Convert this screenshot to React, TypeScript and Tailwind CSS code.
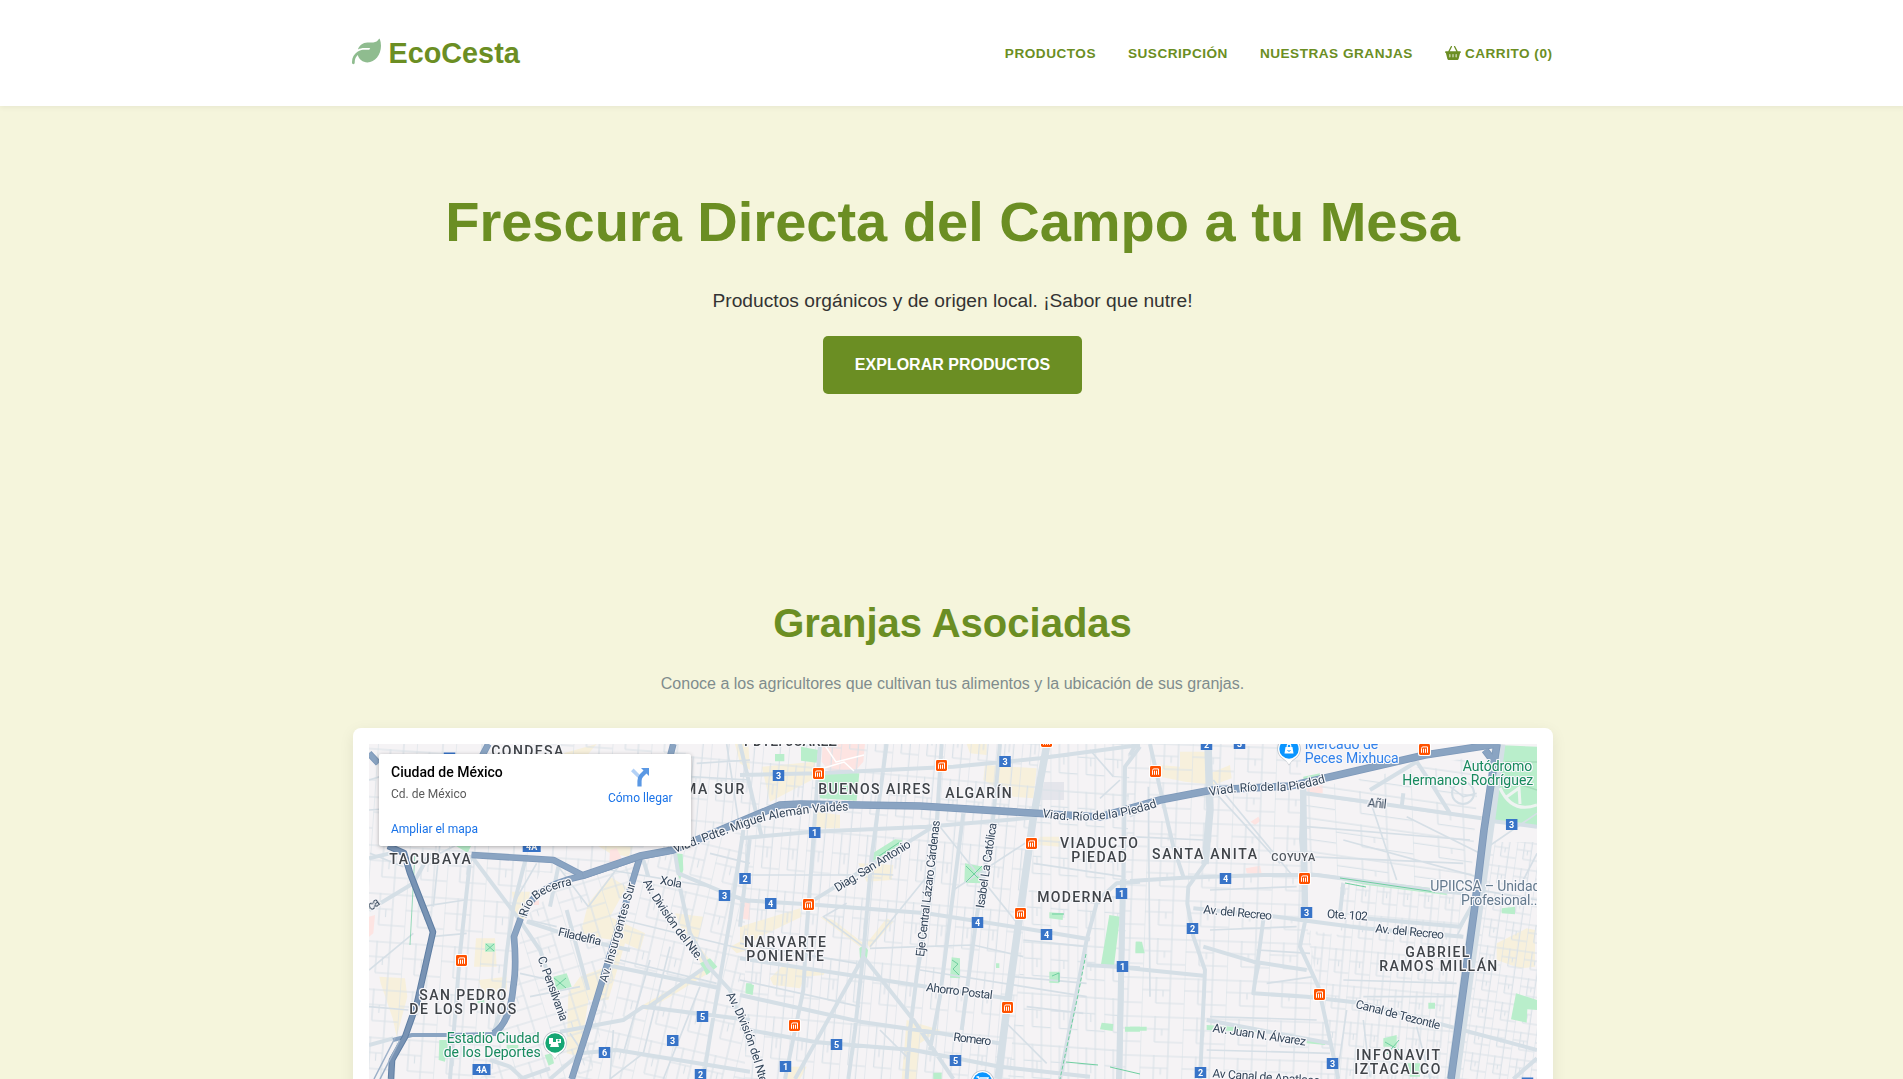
import React from "react";
import { FaBasketShopping, FaLeaf } from "react-icons/fa6";

/* ---------- Map data ---------- */

type District = [text: string, x: number, y: number, width: number];
const districts: District[] = [
  ["TACUBAYA", 389.3, 864, 81.5],
  ["CONDESA", 491.3, 755.5, 72],
  ["ROMA SUR", 662, 794, 82.3],
  ["SAN PEDRO", 419.3, 1000, 87],
  ["DE LOS PINOS", 409.3, 1014, 107],
  ["NARVARTE", 744, 947, 82],
  ["PONIENTE", 746.3, 961, 77.5],
  ["BUENOS AIRES", 818.3, 794, 112],
  ["ALGARÍN", 945.3, 798, 66.5],
  ["VIADUCTO", 1060, 848, 78],
  ["PIEDAD", 1071.3, 862, 55.5],
  ["MODERNA", 1037.3, 902, 75],
  ["PDTE. JUÁREZ", 744, 746, 93],
  ["SANTA ANITA", 1152, 859, 105],
  ["GABRIEL", 1405.3, 957, 64],
  ["RAMOS MILLÁN", 1379.3, 971, 118],
  ["INFONAVIT", 1356, 1060, 84],
  ["IZTACALCO", 1354.3, 1074, 86],
];

type Place = [text: string, x: number, y: number, width: number, color: string];
const places: Place[] = [
  ["Estadio Ciudad", 446.7, 1043, 93, "#188a5e"],
  ["de los Deportes", 443.7, 1057, 97, "#188a5e"],
  ["Autódromo", 1462.7, 771, 69.5, "#188a5e"],
  ["Hermanos Rodríguez", 1402.3, 785, 131, "#188a5e"],
  ["Mercado de", 1304.7, 749, 73.5, "#3080ea"],
  ["Peces Mixhuca", 1304.7, 763, 94, "#3080ea"],
  ["UPIICSA – Unidad", 1430.3, 891, 110, "#647a8e"],
  ["Profesional...", 1461, 905, 80, "#647a8e"],
];

type StreetName = [text: string, x: number, y: number, angle: number, width: number];
const streetNames: StreetName[] = [
  ["Filadelfia", 557.5, 935.5, 13, 44],
  ["C. Pensilvania", 537.5, 958, 70, 68],
  ["Av. Insurgentes Sur", 607, 983, -74, 103],
  ["Xola", 659.5, 884, 10, 22],
  ["ca", 371, 911, -35, 12],
  ["Diag. San Antonio", 837.5, 892, -31.7, 87],
  ["Eje Central Lázaro Cárdenas", 924, 957, -83.3, 137],
  ["Isabel La Católica", 984, 908.5, -81.5, 86],
  ["Añil", 1367.3, 806.7, 6, 19],
  ["Av. del Recreo", 1203, 913.3, 5.5, 69],
  ["Ote. 102", 1326.7, 917.7, 4, 41],
  ["Av. del Recreo", 1375, 932.3, 5.5, 69],
  ["Canal de Tezontle", 1355, 1007.7, 14.5, 87],
  ["Av. Juan N. Álvarez", 1212.3, 1031.7, 8.5, 94],
  ["Av Canal de Apatlaco", 1212.3, 1077.3, 4, 108],
  ["Ahorro Postal", 925.7, 991, 7, 67],
  ["Romero", 953, 1040.7, 7, 38],
];

type CurvedName = [id: string, text: string, d: string, width: number];
const curvedNames: CurvedName[] = [
  ["n1", "Viad. Pdte. Miguel Alemán Valdés", "M675 853 L740 829 Q782 812 860 810", 180],
  ["n2", "Río Becerra", "M527 917 Q531 892 574 885", 59],
  ["n3", "Av. División del Nte.", "M643 882 Q658 912 702 966", 97],
  ["n4", "Av. División del Nte.", "M726 995 Q748 1032 764 1100", 98],
  ["n5", "Viad. Río de la Piedad", "M1042 817 Q1100 828 1166 804", 117],
  ["n6", "Viad. Río de la Piedad", "M1210 796 Q1240 790 1285 791 Q1300 790 1335 780", 117],
];

type Point = [number, number];
type Shield = [x: number, y: number, label: string];
const shields: Shield[] = [
  [531.7, 846.5, "4A"], [745, 878.5, "2"], [724.5, 895.5, "3"], [702.5, 1016.5, "5"],
  [672.7, 1040.5, "3"], [604.5, 1052.5, "6"], [481.5, 1069.5, "4A"], [700.5, 1074.5, "2"],
  [449.5, 758, ""], [778.5, 775.5, "3"], [1005, 761.5, "3"], [814.7, 832.5, "1"],
  [770.7, 903.5, "4"], [977.5, 922.5, "4"], [1046.5, 934.5, "4"], [1121.5, 893.5, "1"],
  [1122.5, 966.5, "1"], [836.5, 1044.5, "5"], [955.5, 1060.5, "5"], [785.5, 1066.5, "1"],
  [1206.5, 744.5, "2"], [1239.5, 743.5, "3"], [1511.7, 824.5, "3"], [1225.5, 878.5, "4"],
  [1306.5, 912.5, "3"], [1192.5, 928.5, "2"], [1332.5, 1063.5, "3"], [1200.5, 1072.5, "2"],
  [1527.5, 1083, ""],
];
const stations: Point[] = [
  [461.5, 960.5], [818.5, 773.5], [941.5, 765.5], [1046.5, 741.5], [1031.5, 843.5],
  [808.5, 904.5], [1020.5, 913.5], [1007.5, 1007.5], [794.5, 1025.5],
  [1155.5, 771.5], [1424.5, 749.5], [1304.5, 878.5], [1319.5, 994.5],
];

/* Local street textures: [id, cell width, cell height, rotation, skew] */
type Texture = [id: string, w: number, h: number, rotation: number, skew: number];
const textures: Texture[] = [
  ["west", 13, 16, 4, 0],
  ["napoles", 15, 13, -17, 0],
  ["narvarte", 11, 17, 13, 0],
  ["center", 8.6, 21, 5, 0],
  ["moderna", 9, 17, 4, 4],
  ["anita", 14, 13, 2, 0],
  ["granjas", 26, 11, 8, 10],
  ["millan", 7, 12, 5, 0],
  ["east", 7.5, 9, 8, 0],
];
const zones: [texture: string, points: string][] = [
  ["west", "369,744 690,744 640,855 583,876 540,872 518,930 508,1010 495,1079 369,1079"],
  ["napoles", "522,920 560,886 640,862 590,1079 480,1079 512,1010"],
  ["narvarte", "640,862 745,830 745,1079 573,1079"],
  ["center", "690,744 1040,744 1010,1079 745,1079 745,826 660,850"],
  ["moderna", "1045,744 1130,744 1122,1079 1008,1079"],
  ["anita", "1128,744 1300,744 1308,930 1340,1079 1122,1079"],
  ["granjas", "1303,790 1480,755 1470,895 1305,876"],
  ["millan", "1340,882 1465,892 1450,1079 1340,1079 1306,930 1340,935"],
  ["east", "1488,842 1537,842 1537,1079 1455,1079"],
];

/* ---------- Map road layers. Each tile is drawn at three units per pixel. ---------- */

interface Tile {
  x: number;
  y: number;
  commercial: string;
  park: string;
  hospital: string;
  minor: string;
  major: string;
  arterial: string;
}

const tiles: Tile[] = [
  {
    x: 350,
    y: 720,
    commercial:
      "M485 515 L540 515 L525 595 L500 600Z M378 655 L435 655 L440 740 L372 740Z M88 770 L165 775 L172 830 L140 950 L128 895 L92 790Z M385 780 L470 770 L470 820 L400 820Z M715 550 L780 470 L830 500 L780 590 L885 640 L870 690 L825 670 L775 840 L715 840 L690 1010 L650 1000 L655 820 L690 770 L770 740 L790 660 L690 645Z M640 100 L740 72 L700 120Z M740 375 L850 378 L835 410 L780 400Z M975 580 L1060 590 L1040 670 L1080 720 L1060 740 L1010 660Z M870 860 L1000 785 L1060 745 L1075 760 L960 830 L890 870Z M1140 680 L1190 655 L1195 690 L1160 700Z M1155 72 L1195 72 L1200 150 L1170 130Z",
    park:
      "M405 670h30v25h-30z M610 770 L650 760 L665 800 L620 812Z M268 960 L295 960 L285 1025 L266 1020Z M584 1005 L605 1000 L612 1030 L596 1037Z M975 400 L998 402 L1000 450 L990 480 L978 450Z M1050 730 L1080 715 L1102 740 L1070 765Z M318 378h45l-10 20z M1190 790h15v30h-15z M470 975h35v15h-35z M383 835h20v15h-20z",
    hospital: "M57 590 L75 585 L70 640 L57 650Z M780 390 L800 385 L815 415 L778 430Z M1172 540 L1200 540 L1200 600 L1170 595Z M545 540h22v15h-22z",
    minor:
      "M57 270 L200 260 M57 180 L90 170 M60 400 L160 440 M57 750 L190 640 M57 860 L175 870 M215 560 L345 540 M245 650 L350 640 M270 370 L250 560 M330 370 L230 420 M560 430 L485 560 M610 420 L715 560 M715 560 L820 420 M535 600 L620 620 M540 830 L690 800 M510 760 L600 780 M780 450 L1080 500 M820 600 L1190 690 M810 720 L1100 790 M880 1000 L780 1077 M700 1000 L660 940 M790 930 L780 1077 M900 720 L820 1000 M960 680 L880 1000 M1050 800 L940 1077 M1130 72 L1165 300 M1020 170 L1200 180 M1040 130 L1200 120 M1080 400 L1200 430",
    major:
      "M362 405 L330 700 L300 1077 M362 405 L505 595 L570 690 L640 900 M530 605 L700 660 L840 690 M530 405 L490 560 L470 700 L455 860 L430 940 M625 440 L600 560 M650 570 L715 810 M57 570 L190 490 L240 400 M57 415 L120 400 M57 975 L130 955 M630 935 L820 900 L880 860 L1200 900 M600 1077 L690 1000 L800 990 L1200 1055 M510 1077 L600 1045 M420 1020 L480 1040 L520 1077 M880 420 L895 470 M975 400 L985 460 L1140 525 L1200 545 M985 480 L1020 640 L1075 740 L1140 810 L1200 980 M1180 330 L1140 600 L1080 950 L1060 1077 M770 735 L1110 805 M1060 745 L890 865",
    arterial:
      "M365 405 L610 420 L700 467 L870 410 L970 390 M430 940 Q480 910 490 800 Q500 740 492 650 L512 595 M520 590 Q540 500 700 467 M870 410 L715 920 L665 1077 M415 72 L385 130 M970 72 L955 130 M57 100 L85 130",
  },
  {
    x: 740,
    y: 730,
    commercial:
      "M230 245 L300 255 L300 295 L228 295Z M65 110 L225 95 L225 145 L90 215Z M680 42 L740 42 L740 75 L690 70Z M735 105 L890 115 L880 205 L820 200 L730 150Z M355 400 L460 405 L455 450 L380 455Z M380 640 L440 565 L460 575 L390 655Z M240 560 L280 570 L370 640 L360 650Z M0 590 L180 535 L185 560 L60 620 L0 660Z M130 705 L260 720 L250 735 L195 740 L180 775 L100 765 L90 745Z M500 870 L600 900 L540 940 L530 1047 L485 1047Z M900 320 L965 320 L960 350 L890 345Z M150 1010 L200 1010 L180 1047 L140 1047Z",
    park:
      "M235 125 L358 130 L350 212 L240 205Z M183 50 L235 60 L230 98 L183 92Z M105 72h28v22h-28z M395 395 L398 370 L465 328 L488 330 L475 350Z M675 400 L730 410 L728 460 L673 458Z M358 655 Q370 640 384 660 L380 690 L360 688Z M635 682 L660 685 L660 745 L630 743Z M1108 555 L1140 560 L1122 707 L1083 703Z M928 547 L970 550 L968 570 L928 565Z M928 725 L960 725 L958 760 L928 758Z M18 760 L42 765 L38 795 L16 790Z M1085 878 L1120 882 L1118 903 L1080 898Z M1155 890h45v15h-45z M1187 635h13v30h-13z M768 700h10v14h-10z M580 1028h25v19h-25z",
    hospital: "M248 42 L375 42 L370 95 L350 118 L270 128 L245 95Z M0 530 L18 515 L25 560 L0 568Z",
    minor:
      "M0 435 L360 435 M370 430 L460 435 M600 290 L720 440 L840 590 M640 480 L870 330 M560 440 L390 650 M390 655 L540 650 L700 645 L850 680 M0 750 L360 830 M0 640 L350 700 M540 720 L1040 800 M800 880 L920 1000 M420 900 L500 980 M320 520 L250 560 L370 650 M1080 205 L1140 150 M1050 60 L1120 140 M880 400 L1150 440 M890 500 L1080 520 M850 630 L1040 650 M820 740 L1040 760 M860 830 L1030 850",
    major:
      "M0 135 L230 130 L640 110 L900 85 L1200 45 M0 325 L220 305 L560 290 L890 262 M0 42 L65 320 M240 42 L215 400 L200 600 L190 780 L135 1047 M440 42 L395 380 L370 670 L345 900 L325 1047 M605 42 L580 440 L530 740 L510 900 L500 1047 M205 520 L580 290 M0 510 L205 523 L560 550 L850 595 L1050 628 M370 680 L165 1047 M370 680 L520 870 L640 1047 M0 685 L560 770 L800 805 M0 795 L360 875 L600 910 L790 942 M0 895 L230 937 L520 960 L780 1010 L1050 1040 M670 250 L600 800 L570 960 M780 42 L760 260 L710 560 L665 900 M1070 520 L1040 630 L960 1047 M1200 455 L1130 460 L1085 500 M1200 50 L1155 110 L1150 500 L1140 1047 M1040 705 L1200 715 M0 590 L30 320",
    arterial: "",
  },
  {
    x: 1130,
    y: 730,
    commercial:
      "M85 105 L150 110 L150 65 L228 65 L228 135 L300 105 L305 145 L250 165 L165 155 L90 140Z M1100 640 L1190 595 L1215 600 L1215 710 L1170 715 L1100 690Z",
    park:
      "M1100 45 L1221 50 L1221 292 L1082 275Z M1158 790 L1221 810 L1221 840 L1192 838 L1190 878 L1143 868Z M630 440 L950 480 L950 495 L870 485 L710 465 L635 450Z M18 635h18l8 35h-28z M0 890h50v12h-50z M230 885 L380 895 L380 905 L230 900Z M530 925 L590 935 L585 945 L530 940Z M895 818h20v18h-20z M1115 535 L1155 530 L1155 553 L1115 550Z M760 925 L800 915 L800 950 L760 950Z M520 140 L570 130 L565 150 L520 155Z M830 1000h40v40h-30z",
    hospital: "M347 415 L390 407 L395 432 L350 430Z M362 275 L385 260 L392 272 L375 285Z M528 175 L578 165 L578 190 L535 190Z",
    minor:
      "M250 150 L490 440 M240 170 L450 400 M720 210 L800 450 M830 260 L1050 370 M530 380 L1000 400 M530 290 L1020 330 M640 330 L1040 440 M0 320 L220 330 M55 170 L60 800 M130 200 L0 260 M240 480 L500 470 M240 600 L500 590 M380 660 L540 670 M390 700 L370 790 M410 760 L550 740 M640 750 L980 760 M700 800 L980 800 M1060 360 L1221 250 M1221 370 L1180 450 M1020 540 L980 620 M650 840 L620 1047 M240 860 L560 870 M230 960 L600 970 M700 870 L720 1040 M860 890 L900 1047 M960 170 L1000 200 L1040 190 M1050 480 L1221 510",
    major:
      "M60 42 L100 220 L130 350 L160 440 M235 42 L240 240 L225 400 L175 470 L172 520 L190 620 L225 720 L210 1047 M0 453 L160 443 L400 435 L560 435 L900 480 L1000 490 M520 150 L513 330 L525 450 L528 560 L510 650 L565 770 L600 930 L625 1047 M525 190 L780 225 L1055 265 M860 95 L910 170 L960 250 M640 460 L630 550 M190 535 L440 560 L700 595 L1000 620 M700 565 L990 590 L1030 520 M220 650 L370 695 L530 720 M0 715 L220 737 M400 570 L370 790 L530 800 L700 820 L1221 960 M820 190 L815 230 M230 870 L600 940 M720 180 L860 95 M1060 270 L1221 290 M1221 985 L1150 1047 M0 75 L18 42",
    arterial: "",
  },
];

const freewayPaths = [
  "M583 875.5 L640 856 L673 850 Q730 826 780 805 L800 804 L920 806 L1032 813 L1100 817 L1160 800 L1212 790 L1290 786 L1325 778 L1425 755 L1497 744",
  "M1497 744 L1484 830 L1475 905 L1464 985 L1451 1079",
  "M1485 750 L1494 762",
];

/* Chained drop shadows give a whole label one light outline, so glyphs never cover their neighbours. */
const halo =
  "[filter:drop-shadow(1px_0_0_#f7f7fa)_drop-shadow(-1px_0_0_#f7f7fa)_drop-shadow(0_1px_0_#f7f7fa)_drop-shadow(0_-1px_0_#f7f7fa)]";
const roadText = "fill-[#34465a] font-[Roboto,sans-serif] text-[12px]";

function StreetTextures() {
  return (
    <>
      <defs>
        {textures.map(([id, w, h, rotation, skew]) => (
          <pattern
            key={id}
            id={"streets-" + id}
            width={w * 3}
            height={h * 3}
            patternUnits="userSpaceOnUse"
            patternTransform={`rotate(${rotation}) skewX(${skew})`}
          >
            <path
              d={`M0 0V${h * 3} M${w} 0V${h * 2} M${w * 2} 0V${h * 3} M0 1H${w * 3} M0 ${h}H${w * 2} M${w} ${h * 2}H${w * 3} M${w * 1.5} ${h}V${h * 1.5}`}
              fill="none"
              stroke="#dae2e8"
              strokeWidth="1.2"
            />
          </pattern>
        ))}
      </defs>
      {zones.map(([id, points]) => (
        <polygon key={id} points={points} fill={`url(#streets-${id})`} />
      ))}
    </>
  );
}

function MetroIcon({ x, y }: { x: number; y: number }) {
  return (
    <g transform={`translate(${x} ${y})`}>
      <rect x="-6.5" y="-6.5" width="13" height="13" rx="2" fill="#fff" />
      <rect x="-5.5" y="-5.5" width="11" height="11" rx="1.4" fill="#ff5200" />
      <path d="M-3 3.3V-1Q-3 -2.6 -1.5 -2.6H3V3.3M-1 3.3V-.8M1 3.3V-.8" fill="none" stroke="#fff" strokeWidth="1" />
    </g>
  );
}

function RouteShield({ x, y, label }: { x: number; y: number; label: string }) {
  const w = label.length > 1 ? 18 : 11.5;
  return (
    <g transform={`translate(${x} ${y})`}>
      <rect x={-w / 2} y="-5.5" width={w} height="11" fill="#3874c8" />
      {label && (
        <text y="3.2" textAnchor="middle" className="fill-white font-[Roboto,sans-serif] text-[9px] font-bold">
          {label}
        </text>
      )}
    </g>
  );
}

function Pin({ x, y, color, children }: { x: number; y: number; color: string; children: React.ReactNode }) {
  return (
    <g transform={`translate(${x} ${y})`}>
      <path d="M0 16.5Q-2 12.5 -6.5 9.8A11.8 11.8 0 1 1 6.5 9.8Q2 12.5 0 16.5Z" fill="#9aa4ad" opacity=".6" />
      <path d="M0 15.5Q-2 12 -6 9.2A11 11 0 1 1 6 9.2Q2 12 0 15.5Z" fill="#fff" />
      <circle r="9.7" fill={color} />
      {children}
    </g>
  );
}

function CityMap() {
  return (
    <svg viewBox="369 744 1168 450" className="block h-[450px] w-[1168px]" role="img" aria-label="Mapa de granjas">
      <rect x="369" y="744" width="1168" height="450" fill="#f5f3f5" />
      {tiles.map((t) => (
        <g key={t.x} transform={`translate(${t.x} ${t.y}) scale(.33333)`}>
          <path d={t.commercial} fill="#f7f0dc" />
          <path d={t.hospital} fill="#fde4e2" />
        </g>
      ))}
      <path d="M1044 782h20v18h-24z" fill="#e4e5eb" />
      <StreetTextures />
      {tiles.map((t) => (
        <g key={t.x} transform={`translate(${t.x} ${t.y}) scale(.33333)`} fill="none" strokeLinejoin="round">
          <path d={t.park} fill="#b9eecb" />
          <path d={t.minor} stroke="#d6dfe6" strokeWidth="5" />
          <path d={t.major} stroke="#d5dfe6" strokeWidth="12" />
        </g>
      ))}
      <g fill="none" stroke="#d5dfe6">
        <path d="M1047 744 L1033 820 L1007 1007 L998 1079" strokeWidth="7.5" />
        <path d="M1123 880 L1119 1079" strokeWidth="6" />
        <path d="M1208 744 L1210 810 L1205 864" strokeWidth="7.5" />
        <path d="M1303 780 L1305 915" strokeWidth="6.5" />
        <path d="M1499 744 L1486 840 L1453 1079" strokeWidth="13" />
        <circle cx="1463" cy="793" r="11" strokeWidth="2" />
      </g>
      <g fill="none" stroke="#6fcfa0" strokeWidth="1">
        <path d="M1086 954 L1078 995 L1060 1079" strokeDasharray="4 2" />
        <path d="M1066 1062 L1098 1065 M1110 1067 L1140 1074" />
        <path d="M1340 878 L1435 892 M1345 883 L1366 887" />
        <path d="M415 852 L410 945" strokeWidth=".7" />
        <path d="M966 866 L982 882 M982 866 L966 882 M486 944 L494 951 M494 944 L486 951 M554 978l12 10 M566 978l-12 10 M1385 1042l14 8 M1399 1040l-12 14" />
        <path d="M952 960l6 4-5 5 6 6 M862 996" />
        <path d="M876 858 L900 842 M1052 914h12 M1052 976l7-3v9" />
      </g>
      <path d="M1500 788 Q1512 814 1537 805 M1505 798 L1519 788 L1520 804" fill="none" stroke="#eef3f1" strokeWidth="3" />
      <path d="M1505 762 L1537 762 M1500 778 L1537 790" fill="none" stroke="#a3dcb8" strokeWidth="1.5" />
      <path d="M824 744 l12 18 28 -7 M824 768 l20 -6 10 9" fill="none" stroke="#fff" strokeWidth="1.5" />
      <g fill="none" strokeLinejoin="round">
        {tiles.map((t) => (
          <g key={t.x} transform={`translate(${t.x} ${t.y}) scale(.33333)`}>
            <path d={t.arterial} stroke="#7d98b9" strokeWidth="20" />
            <path d={t.arterial} stroke="#8aa4c2" strokeWidth="15" />
          </g>
        ))}
        {freewayPaths.map((d) => (
          <path key={d} d={d} stroke="#7d98b9" strokeWidth="7.6" />
        ))}
        {freewayPaths.map((d) => (
          <path key={d} d={d} stroke="#8aa4c2" strokeWidth="6" />
        ))}
        <path d="M393 1040 L412 1035 L447 1035 L495 1034" stroke="#8aa4c2" strokeWidth="4" />
        <path d="M388 846 L404 853 L410 873 L433 932 L417 1003 L405 1037 L392 1060 L391 1079" stroke="#5f7ea3" strokeWidth="6.5" />
        <path d="M388 846 L404 853 L410 873 L433 932 L417 1003 L405 1037 L392 1060 L391 1079" stroke="#7893b4" strokeWidth="4.5" />
        <path d="M395 1038 L374 1079 M400 1040 L380 1079" stroke="#9db1c9" strokeWidth="1.5" />
      </g>

      <g className={halo}>
        {streetNames.map(([text, x, y, angle, width]) => (
          <text
            key={text + x}
            transform={`translate(${x} ${y}) rotate(${angle})`}
            textLength={width}
            className={roadText}
          >
            {text}
          </text>
        ))}
        {curvedNames.map(([id, text, d, width]) => (
          <g key={id}>
            <path id={id} d={d} fill="none" />
            <text className={roadText} textLength={width}>
              <textPath href={"#" + id}>{text}</textPath>
            </text>
          </g>
        ))}
      </g>
      <g className={halo}>
        {districts.map(([text, x, y, width]) => (
          <text
            key={text}
            x={x}
            y={y}
            textLength={width}
            className="fill-[#404449] font-[Roboto,sans-serif] text-[14px] font-medium"
          >
            {text}
          </text>
        ))}
        <text
          x="1271.3"
          y="861.3"
          textLength="44"
          className="fill-[#50565d] font-[Roboto,sans-serif] text-[11px] font-medium"
        >
          COYUYA
        </text>
        {places.map(([text, x, y, width, color]) => (
          <text
            key={text}
            x={x}
            y={y}
            textLength={width}
            fill={color}
            className="font-[Roboto,sans-serif] text-[14px]"
          >
            {text}
          </text>
        ))}
      </g>

      {shields.map(([x, y, label]) => (
        <RouteShield key={x + "-" + y} x={x} y={y} label={label} />
      ))}
      {stations.map(([x, y]) => (
        <MetroIcon key={x + "-" + y} x={x} y={y} />
      ))}
      <Pin x={555} y={1043} color="#17a673">
        <path d="M-6 -5h4v4h3v-3h5v4h-3l1 4h-9l1 -3h-2z" fill="#fff" />
        <circle cx="3.5" cy="-2.5" r="1" fill="#17a673" />
      </Pin>
      <Pin x={1289} y={749} color="#0a95ff">
        <path d="M-3.5 -2h7l1 6.500h-9z" fill="#fff" />
        <path d="M-1.800 -1.500v-1.500a1.800 1.800 0 0 1 3.600 0v1.500" fill="none" stroke="#fff" strokeWidth="1.200" />
        <path d="M-1.500 1.500q1.500 1.500 3 0" fill="none" stroke="#0a95ff" />
      </Pin>
      <Pin x={982.5} y={1082} color="#0a95ff">
        <path d="M-6 -5h2l2 5h6l1.500 -4h-8" fill="none" stroke="#fff" strokeWidth="1.500" />
      </Pin>
    </svg>
  );
}

function MapInfoCard() {
  return (
    <div className="absolute left-[10px] top-[10px] flex h-[92px] w-[312px] justify-between rounded-[2px] bg-white pl-[12.5px] pr-[18px] font-[Roboto,sans-serif] shadow-[0_1px_4px_rgba(0,0,0,0.3)]">
      <div className="flex flex-col pt-[9px]">
        <h3 className="text-[14px] font-medium leading-[19px] text-black">Ciudad de México</h3>
        <p className="mt-[4px] text-[12px] leading-[16px] text-[#5b5b5b]">Cd. de México</p>
        <a href="#mapa" className="mt-[19px] text-[12px] leading-[16px] text-[#1a73e8]">
          Ampliar el mapa
        </a>
      </div>
      <a href="#ruta" className="flex flex-col items-center pt-[13px] text-[12px] leading-[16px] text-[#1a73e8]">
        <svg viewBox="0 0 20 20" className="size-5">
          <path d="M2.300 2.900 L9 9.500" stroke="#b3d1f6" strokeWidth="3.600" />
          <path d="M9.500 19.500 V14 Q9.500 10.500 11.500 8.500 L15.500 4.500" fill="none" stroke="#5a98e4" strokeWidth="4.200" />
          <path d="M11 1h8v8z" fill="#5a98e4" />
        </svg>
        <span className="mt-[3px]">Cómo llegar</span>
      </a>
    </div>
  );
}

export default function App() {
  return (
    <div className="h-screen w-full overflow-hidden bg-[#f5f5dc] font-['Liberation_Sans',Arial,sans-serif] text-[#333]">
      <div className="w-[1905px]">
        <header className="relative h-[106px] bg-white shadow-[0_2px_5px_rgba(0,0,0,0.05)]">
          <div className="mx-auto flex h-full w-[1200px] items-center justify-between">
            <a href="#inicio" className="-ml-px flex items-center gap-2 text-[28.8px] font-bold text-[#6b8e23]">
              <FaLeaf className="-mt-[3px] size-[29px] text-[#8fbc8f]" />
              <span className="relative top-px">EcoCesta</span>
            </a>
            <nav className="flex items-center gap-8 pt-[2px] text-[13.6px] font-bold tracking-[0.5px] text-[#6b8e23]">
              <a href="#productos">PRODUCTOS</a>
              <a href="#suscripcion">SUSCRIPCIÓN</a>
              <a href="#granjas">NUESTRAS GRANJAS</a>
              <a href="#carrito" className="flex items-center gap-1">
                <FaBasketShopping className="-mt-px size-4" />
                <span>CARRITO (0)</span>
              </a>
            </nav>
          </div>
        </header>

        <section className="flex flex-col items-center pt-[84px] text-center">
          <h1 className="text-[56px] font-bold leading-[64px] text-[#6b8e23]">
            Frescura Directa del Campo a tu Mesa
          </h1>
          <p className="mt-[32px] text-[19.2px] leading-[30px]">Productos orgánicos y de origen local. ¡Sabor que nutre!</p>
          <a
            href="#productos"
            className="mt-[20px] flex h-[58px] w-[259px] items-center justify-center rounded-[5px] bg-[#6b8e23] text-base font-bold text-white"
          >
            EXPLORAR PRODUCTOS
          </a>
        </section>

        <section id="granjas" className="mx-auto mt-[200px] flex w-[1200px] flex-col items-center">
          <h2 className="text-[40px] font-bold leading-[58px] text-[#6b8e23]">Granjas Asociadas</h2>
          <p className="mt-[19px] text-base leading-[26px] text-[#7f8c8d]">
            Conoce a los agricultores que cultivan tus alimentos y la ubicación de sus granjas.
          </p>
          <div className="mt-[31px] w-full rounded-[8px] bg-white p-4 shadow-[0_4px_15px_rgba(0,0,0,0.08)]">
            <div className="relative overflow-hidden">
              <CityMap />
              <MapInfoCard />
            </div>
          </div>
        </section>
      </div>
    </div>
  );
}
